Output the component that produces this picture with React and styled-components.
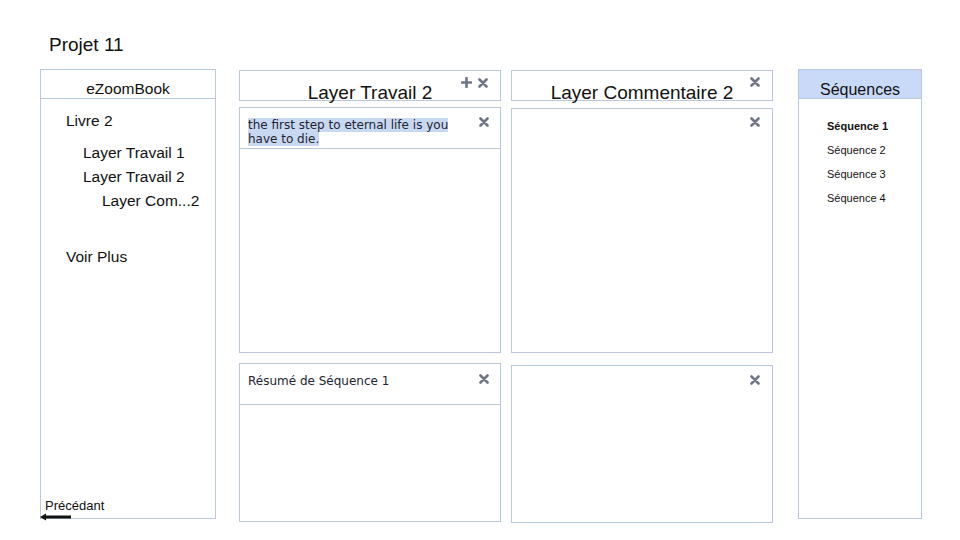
import React from "react";
import styled, { createGlobalStyle } from "styled-components";

const Global = createGlobalStyle`
  html, body { margin: 0; padding: 0; background: #ffffff; }
  body { font-family: "Liberation Sans", Arial, sans-serif; color: #111; }
`;

const BORDER = "#b9c8de";

const Page = styled.div`
  width: 960px;
  height: 540px;
  box-sizing: border-box;
  padding: 34px 0 0 0;
  position: relative;
  overflow: hidden;
`;

const Title = styled.h1`
  margin: 0 0 13px 49px;
  font-size: 19px;
  font-weight: normal;
  line-height: 22px;
`;

const Row = styled.div`
  display: flex;
  align-items: flex-start;
  padding-left: 40px;
`;

const SidePanel = styled.div`
  box-sizing: border-box;
  width: ${(p) => p.$w}px;
  height: 450px;
  margin-left: ${(p) => p.$ml || 0}px;
  border: 1px solid ${BORDER};
  display: flex;
  flex-direction: column;
  position: relative;
`;

const SideHeader = styled.div`
  height: 29px;
  border-bottom: 1px solid ${BORDER};
  background: ${(p) => (p.$blue ? "#c9daf8" : "transparent")};
  display: flex;
  align-items: center;
  justify-content: center;
  font-size: ${(p) => p.$fs}px;
  padding-top: ${(p) => p.$pt || 0}px;
  box-sizing: border-box;
`;

const Tree = styled.div`
  flex: 1;
  padding-top: 13px;
  display: flex;
  flex-direction: column;
`;

const TreeItem = styled.div`
  font-size: 15.5px;
  line-height: 18px;
  padding-left: ${(p) => p.$indent}px;
  margin-top: ${(p) => p.$mt || 0}px;
`;

const Footer = styled.div`
  padding: 0 0 5px 4px;
  font-size: 13px;
  line-height: 15px;
`;

const ArrowWrap = styled.div`
  position: absolute;
  left: -1px;
  bottom: -3px;
  line-height: 0;
`;

const Column = styled.div`
  width: 262px;
  margin-left: ${(p) => p.$ml}px;
  margin-top: 1px;
  display: flex;
  flex-direction: column;
`;

const LayerHeader = styled.div`
  box-sizing: border-box;
  height: 31px;
  border: 1px solid ${BORDER};
  display: flex;
  align-items: flex-start;
  justify-content: center;
  font-size: 19px;
  line-height: 22px;
  position: relative;
  padding-top: 11px;
`;

const HeaderIcons = styled.div`
  position: absolute;
  right: 12px;
  top: 6px;
  display: flex;
  gap: 6px;
  align-items: center;
`;

const Box = styled.div`
  box-sizing: border-box;
  height: ${(p) => p.$h}px;
  margin-top: ${(p) => p.$mt}px;
  border: 1px solid ${BORDER};
  display: flex;
  flex-direction: column;
  position: relative;
`;

const BoxHeader = styled.div`
  box-sizing: border-box;
  height: ${(p) => p.$h}px;
  border-bottom: 1px solid ${BORDER};
  padding: ${(p) => p.$pt}px 30px 0 8px;
  font-family: "DejaVu Sans", Verdana, sans-serif;
  font-size: 12px;
  line-height: 14px;
  color: #1e2433;
`;

const Highlight = styled.span`
  background: #c8d8f0;
`;

const CloseSpot = styled.div`
  position: absolute;
  right: ${(p) => p.$right || 11}px;
  top: ${(p) => p.$top}px;
  line-height: 0;
`;

const SeqList = styled.div`
  display: flex;
  flex-direction: column;
  padding: 20px 0 0 28px;
  gap: 10px;
`;

const SeqItem = styled.div`
  font-size: 11px;
  line-height: 14px;
  font-weight: ${(p) => (p.$bold ? "bold" : "normal")};
`;

const CloseIcon = () => (
  <svg width="10" height="10" viewBox="0 0 10 10">
    <path d="M1.5 1.5 L8.5 8.5 M8.5 1.5 L1.5 8.5" stroke="#6e7688" strokeWidth="2.6" strokeLinecap="round" />
  </svg>
);

const PlusIcon = () => (
  <svg width="11" height="11" viewBox="0 0 11 11">
    <path d="M5.5 1 L5.5 10 M1 5.5 L10 5.5" stroke="#6e7688" strokeWidth="2.6" strokeLinecap="round" />
  </svg>
);

const Arrow = () => (
  <svg width="32" height="8" viewBox="0 0 32 8">
    <path d="M4 4 L31 4" stroke="#111" strokeWidth="3" />
    <path d="M0 4 L6 0.5 L6 7.5 Z" fill="#111" />
  </svg>
);

export default function App() {
  return (
    <>
      <Global />
      <Page>
        <Title>Projet 11</Title>
        <Row>
          <SidePanel $w={176}>
            <SideHeader $fs={15.5} $pt={10}>eZoomBook</SideHeader>
            <Tree>
              <TreeItem $indent={25}>Livre 2</TreeItem>
              <TreeItem $indent={42} $mt={14}>Layer Travail 1</TreeItem>
              <TreeItem $indent={42} $mt={6}>Layer Travail 2</TreeItem>
              <TreeItem $indent={61} $mt={6}>Layer Com...2</TreeItem>
              <TreeItem $indent={25} $mt={38}>Voir Plus</TreeItem>
            </Tree>
            <Footer>Précédant</Footer>
            <ArrowWrap>
              <Arrow />
            </ArrowWrap>
          </SidePanel>

          <Column $ml={23}>
            <LayerHeader>
              Layer Travail 2
              <HeaderIcons>
                <PlusIcon />
                <CloseIcon />
              </HeaderIcons>
            </LayerHeader>
            <Box $h={246} $mt={6}>
              <BoxHeader $h={41} $pt={10}>
                <Highlight>the first step to eternal life is you have to die.</Highlight>
              </BoxHeader>
              <CloseSpot $top={9}><CloseIcon /></CloseSpot>
            </Box>
            <Box $h={159} $mt={10}>
              <BoxHeader $h={41} $pt={10}>Résumé de Séquence 1</BoxHeader>
              <CloseSpot $top={10}><CloseIcon /></CloseSpot>
            </Box>
          </Column>

          <Column $ml={10}>
            <LayerHeader>
              Layer Commentaire 2
              <HeaderIcons>
                <CloseIcon />
              </HeaderIcons>
            </LayerHeader>
            <Box $h={245} $mt={7}>
              <CloseSpot $top={8} $right={12}><CloseIcon /></CloseSpot>
            </Box>
            <Box $h={158} $mt={12}>
              <CloseSpot $top={9} $right={12}><CloseIcon /></CloseSpot>
            </Box>
          </Column>

          <SidePanel $w={124} $ml={25}>
            <SideHeader $fs={16} $blue $pt={11}>Séquences</SideHeader>
            <SeqList>
              <SeqItem $bold>Séquence 1</SeqItem>
              <SeqItem>Séquence 2</SeqItem>
              <SeqItem>Séquence 3</SeqItem>
              <SeqItem>Séquence 4</SeqItem>
            </SeqList>
          </SidePanel>
        </Row>
      </Page>
    </>
  );
}
